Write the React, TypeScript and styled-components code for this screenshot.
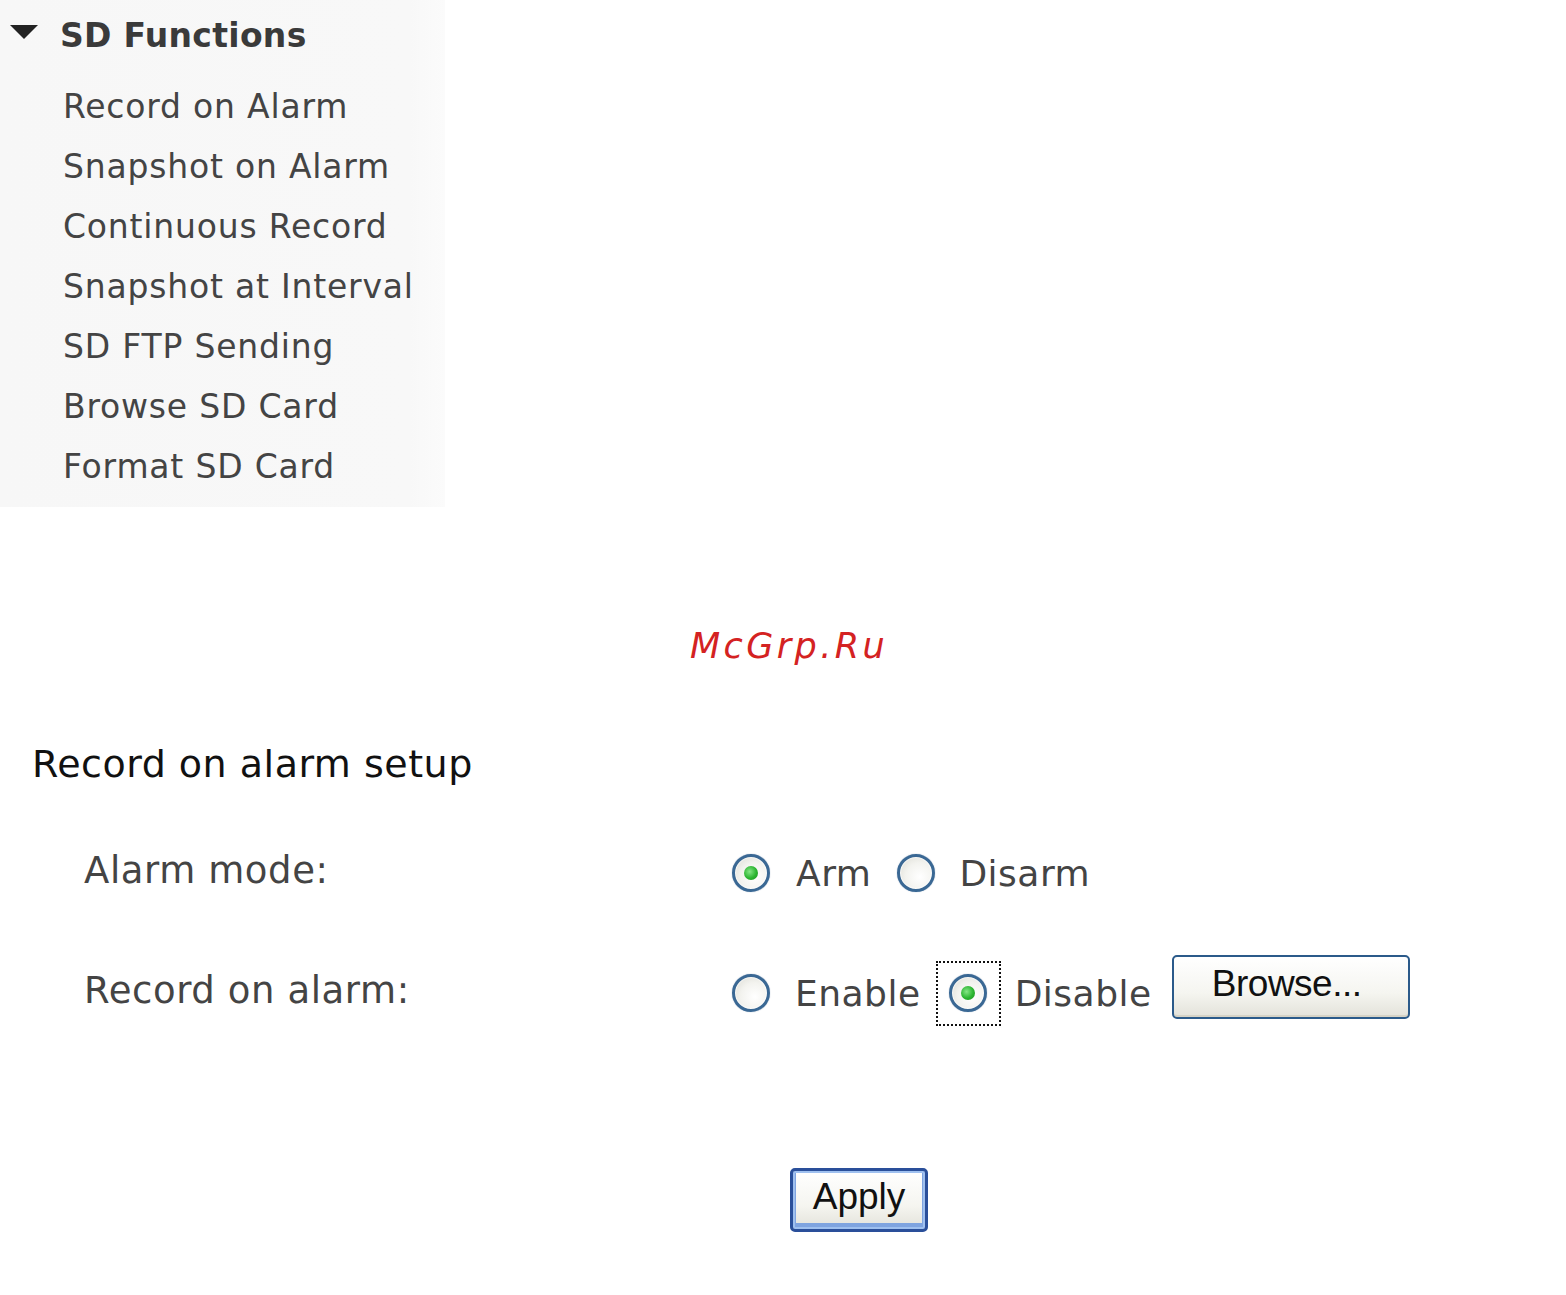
import styled, { createGlobalStyle } from 'styled-components';

const GlobalStyle = createGlobalStyle`
  html, body {
    margin: 0;
    padding: 0;
    background: #ffffff;
  }
  body {
    font-family: "DejaVu Sans", Verdana, sans-serif;
  }
`;

const Page = styled.div`
  width: 1566px;
  min-height: 1295px;
  background: #fff;
`;

const Sidebar = styled.nav`
  width: 445px;
  height: 507px;
  box-sizing: border-box;
  background: linear-gradient(to right, #f7f7f7 0%, #f8f8f8 92%, #fbfbfb 100%);
  color: #444;
`;

const SideHeader = styled.div`
  display: flex;
  align-items: center;
  height: 70px;
  padding-left: 10px;
  font-size: 33px;
  font-weight: bold;
  color: #3a3a3a;
  letter-spacing: 0.3px;
`;

const Caret = styled.span`
  width: 0;
  height: 0;
  border-left: 14px solid transparent;
  border-right: 14px solid transparent;
  border-top: 14px solid #222;
  margin-right: 22px;
  margin-top: -6px;
`;

const SideList = styled.ul`
  list-style: none;
  margin: 7px 0 0;
  padding: 0 0 0 63px;
`;

const SideItem = styled.li`
  height: 60px;
  line-height: 60px;
  font-size: 33px;
  color: #444;
  letter-spacing: 0.8px;
  white-space: nowrap;
`;

const Watermark = styled.div`
  margin-top: 109px;
  height: 60px;
  line-height: 60px;
  text-align: center;
  padding-left: 12px;
  font-size: 35px;
  font-style: italic;
  color: #d42222;
  letter-spacing: 3.4px;
`;

const Setup = styled.section`
  margin-top: 58px;
`;

const Title = styled.h2`
  margin: 0;
  padding-left: 32px;
  height: 60px;
  line-height: 60px;
  font-size: 38px;
  font-weight: normal;
  color: #111;
  letter-spacing: 0.5px;
`;

const FormRow = styled.div<{ $gap: number }>`
  display: flex;
  align-items: center;
  height: 70px;
  margin-top: ${(p) => p.$gap}px;
`;

const Label = styled.div`
  width: 648px;
  padding-left: 84px;
  flex-shrink: 0;
  font-size: 37px;
  color: #444;
  letter-spacing: 0.6px;
  margin-top: -6px;
`;

const Options = styled.div`
  display: flex;
  align-items: center;
`;

const Radio = styled.span<{ $checked?: boolean }>`
  position: relative;
  width: 38px;
  height: 38px;
  box-sizing: border-box;
  border-radius: 50%;
  border: 3px solid #3a6894;
  box-shadow: 0 0 1px 0 rgba(30, 70, 120, 0.6), inset 0 0 1px 1px rgba(255, 255, 255, 0.7);
  background: radial-gradient(circle at 62% 62%, #ffffff 0%, #f3f3ef 50%, #d9d9d1 100%);
  flex-shrink: 0;
  &::after {
    content: '';
    display: ${(p) => (p.$checked ? 'block' : 'none')};
    position: absolute;
    left: 50%;
    top: 50%;
    width: 14px;
    height: 14px;
    margin: -7px 0 0 -7px;
    border-radius: 50%;
    background: radial-gradient(circle at 40% 40%, #86e686 0%, #2bb530 55%, #1b8f21 100%);
  }
`;

const Focus = styled.span`
  display: flex;
  align-items: center;
  justify-content: center;
  width: 65px;
  height: 65px;
  box-sizing: border-box;
  border: 2px dotted #111;
  margin-left: 15px;
  margin-right: 14px;
`;

const OptionText = styled.span<{ $left: number; $right: number }>`
  font-size: 36px;
  color: #444;
  letter-spacing: 0.5px;
  margin-left: ${(p) => p.$left}px;
  margin-right: ${(p) => p.$right}px;
  white-space: nowrap;
`;

const XpButton = styled.button<{ $width: number; $heavy?: boolean }>`
  width: ${(p) => p.$width}px;
  height: 64px;
  box-sizing: border-box;
  border: ${(p) => (p.$heavy ? '3px solid #2a4f9a' : '2px solid #2b5a8a')};
  border-radius: 5px;
  background: linear-gradient(to bottom, #ffffff 0%, #f5f5f0 60%, #e3e2da 100%);
  box-shadow: ${(p) =>
    p.$heavy
      ? 'inset 0 0 0 2px #9fc0ef, inset 0 -3px 0 3px #7fa4e0'
      : 'inset 0 -2px 0 0 #d6d3c6'};
  font-family: "Liberation Sans", Arial, sans-serif;
  font-size: 37px;
  color: #111;
  padding: 0 0 6px;
  cursor: pointer;
`;

const BrowseButton = styled(XpButton)`
  margin-top: -13px;
  letter-spacing: -0.5px;
  padding-right: 8px;
`;

const ApplyRow = styled.div`
  margin-top: 140px;
  padding-left: 790px;
`;

const items = [
  'Record on Alarm',
  'Snapshot on Alarm',
  'Continuous Record',
  'Snapshot at Interval',
  'SD FTP Sending',
  'Browse SD Card',
  'Format SD Card',
];

export default function App() {
  return (
    <Page>
      <GlobalStyle />
      <Sidebar>
        <SideHeader>
          <Caret />
          SD Functions
        </SideHeader>
        <SideList>
          {items.map((item) => (
            <SideItem key={item}>{item}</SideItem>
          ))}
        </SideList>
      </Sidebar>

      <Watermark>McGrp.Ru</Watermark>

      <Setup>
        <Title>Record on alarm setup</Title>

        <FormRow $gap={44}>
          <Label>Alarm mode:</Label>
          <Options>
            <Radio $checked />
            <OptionText $left={26} $right={26}>Arm</OptionText>
            <Radio />
            <OptionText $left={24} $right={0}>Disarm</OptionText>
          </Options>
        </FormRow>

        <FormRow $gap={50}>
          <Label>Record on alarm:</Label>
          <Options>
            <Radio />
            <OptionText $left={25} $right={0}>Enable</OptionText>
            <Focus>
              <Radio $checked />
            </Focus>
            <OptionText $left={0} $right={20}>Disable</OptionText>
            <BrowseButton $width={238} type="button">Browse...</BrowseButton>
          </Options>
        </FormRow>

        <ApplyRow>
          <XpButton $width={138} $heavy type="button">Apply</XpButton>
        </ApplyRow>
      </Setup>
    </Page>
  );
}
